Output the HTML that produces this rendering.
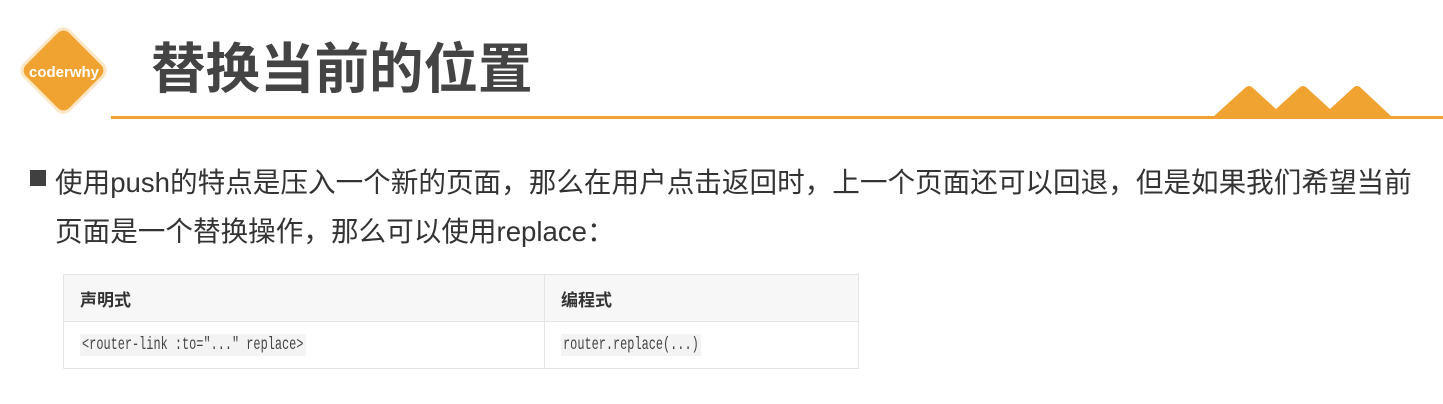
<!DOCTYPE html>
<html><head><meta charset="utf-8"><style>
body{margin:0;width:1443px;height:404px;background:#fff;position:relative;overflow:hidden;font-family:"Liberation Sans","Noto Sans CJK SC",sans-serif}
.title{position:absolute;left:151px;top:30px;font-size:54.5px;font-weight:bold;color:#444;line-height:80px}
.line{position:absolute;left:111px;top:116px;width:1332px;height:3px;background:#f0a330}
.txt{position:absolute;left:55px;top:158px;font-size:27.6px;color:#333;line-height:49px;white-space:nowrap}
.sq{position:absolute;left:30px;top:170px;width:16px;height:16px;background:#404040}
table{position:absolute;left:63px;top:274px;width:796px;border-collapse:collapse;font-size:17px;color:#333}
td{border:1px solid #e4e4e4;padding:0 16px;height:46px}
tr:first-child td{background:#f7f7f7;font-weight:bold}
code{display:inline-block;transform:scaleX(0.68);transform-origin:left center;font-family:"Liberation Mono",monospace;font-size:17.5px;background:#f3f3f3;padding:1px 3px;color:#444}
</style></head><body>
<svg style="position:absolute;left:0;top:0" width="130" height="130">
<rect x="30" y="37" width="67" height="67" rx="10" transform="rotate(45 63.5 70.5)" fill="#fbe6c6"/>
<rect x="33" y="40" width="61" height="61" rx="8" transform="rotate(45 63.5 70.5)" fill="#f0a330"/>
<text x="64" y="77" text-anchor="middle" font-family="Liberation Sans" font-weight="bold" font-size="15" fill="#fff">coderwhy</text>
</svg>
<div class="title">替换当前的位置</div>
<div class="line"></div>
<svg style="position:absolute;left:1210px;top:80px" width="190" height="40">
<path d="M3 37 L35 8 Q39 4 43 8 L66 29 L89 8 Q93 4 97 8 L120 29 L143 8 Q147 4 151 8 L182 37 Z" fill="#f0a330"/>
</svg>
<div class="sq"></div>
<div class="txt">使用push的特点是压入一个新的页面，那么在用户点击返回时，上一个页面还可以回退，但是如果我们希望当前<br>页面是一个替换操作，那么可以使用replace：</div>
<table>
<tr><td style="width:448px">声明式</td><td>编程式</td></tr>
<tr><td><code>&lt;router-link :to="..." replace&gt;</code></td><td><code>router.replace(...)</code></td></tr>
</table>
</body></html>
